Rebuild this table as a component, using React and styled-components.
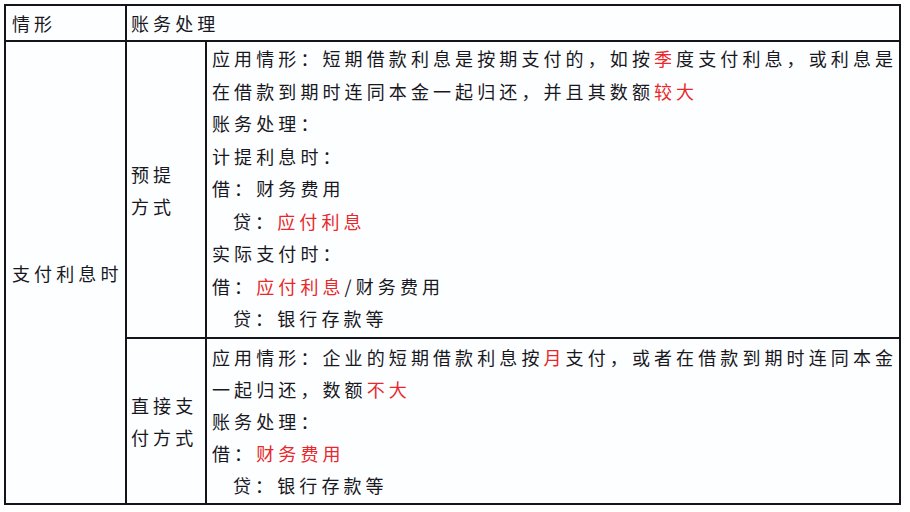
import React from 'react'
import styled, { createGlobalStyle } from 'styled-components'

// 短期借款利息 账务处理表

const Global = createGlobalStyle`
body {
  margin: 0;
  background: #ffffff;
  font-family: 'Noto Sans CJK SC', 'Noto Sans', sans-serif;
}
`

const Page = styled.div`
padding: 4px 0 0 4px;
width: 910px;
height: 512px;
box-sizing: border-box;
`

const Table = styled.div`
display: grid;
grid-template-columns: 119px 78px 1fr;
grid-template-rows: 34px 295px 164px;
gap: 2px;
padding: 2px;
width: 897px;
box-sizing: border-box;
background: #14141c;
`

const Cell = styled.div`
background: #fdfeff;
color: #18181e;
font-size: 18px;
letter-spacing: 4.1px;
white-space: nowrap;
padding-left: ${p => p.pad || 5}px;
display: flex;
flex-direction: column;
justify-content: ${p => (p.middle ? 'center' : 'flex-start')};
grid-column: ${p => p.col || 'auto'};
grid-row: ${p => p.row || 'auto'};
`

const Line = styled.div`
height: ${p => p.h || 32}px;
line-height: ${p => p.h || 32}px;
padding-left: ${p => (p.indent ? 21 : 0)}px;
`

const Body = styled.div`
padding-top: ${p => p.top || 0}px;
`

const Red = styled.span`
color: #e8282a;
`

const App = () => {
  return (
    <>
      <Global />
      <Page>
        <Table>
          <Cell pad={6} middle>
            <Line h={34}>情形</Line>
          </Cell>
          <Cell pad={4} col="2 / 4" middle>
            <Line h={34}>账务处理</Line>
          </Cell>

          <Cell pad={6} row="2 / 4" middle>
            <Line>支付利息时</Line>
          </Cell>

          <Cell pad={4} middle>
            <Line>预提</Line>
            <Line>方式</Line>
          </Cell>
          <Cell>
            <Body>
              <Line h={32.5}>应用情形：短期借款利息是按期支付的，如按<Red>季</Red>度支付利息，或利息是</Line>
              <Line h={32.5}>在借款到期时连同本金一起归还，并且其数额<Red>较大</Red></Line>
              <Line h={32.5}>账务处理：</Line>
              <Line h={32.5}>计提利息时：</Line>
              <Line h={32.5}>借：财务费用</Line>
              <Line h={32.5} indent>贷：<Red>应付利息</Red></Line>
              <Line h={32.5}>实际支付时：</Line>
              <Line h={32.5}>借：<Red>应付利息</Red>/财务费用</Line>
              <Line h={32.5} indent>贷：银行存款等</Line>
            </Body>
          </Cell>

          <Cell pad={4} middle>
            <Line>直接支</Line>
            <Line>付方式</Line>
          </Cell>
          <Cell>
            <Body top={2}>
              <Line>应用情形：企业的短期借款利息按<Red>月</Red>支付，或者在借款到期时连同本金</Line>
              <Line>一起归还，数额<Red>不大</Red></Line>
              <Line>账务处理：</Line>
              <Line>借：<Red>财务费用</Red></Line>
              <Line indent>贷：银行存款等</Line>
            </Body>
          </Cell>
        </Table>
      </Page>
    </>
  )
}

export default App
